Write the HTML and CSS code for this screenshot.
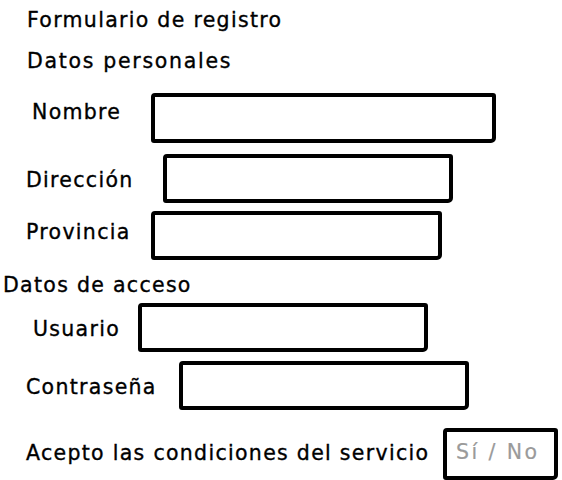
FILE: index.html
```html
<!DOCTYPE html>
<html lang="es">
<head>
<meta charset="utf-8">
<title>Formulario de registro</title>
<link rel="stylesheet" href="styles.css">
</head>
<body>
<main class="form">
  <h1 class="heading heading-title">Formulario de registro</h1>
  <h2 class="heading heading-personal">Datos personales</h2>

  <div class="row row-nombre">
    <label class="label">Nombre</label>
    <div class="field"></div>
  </div>
  <div class="row row-direccion">
    <label class="label">Dirección</label>
    <div class="field"></div>
  </div>
  <div class="row row-provincia">
    <label class="label">Provincia</label>
    <div class="field"></div>
  </div>

  <h2 class="heading heading-acceso">Datos de acceso</h2>

  <div class="row row-usuario">
    <label class="label">Usuario</label>
    <div class="field"></div>
  </div>
  <div class="row row-contrasena">
    <label class="label">Contraseña</label>
    <div class="field"></div>
  </div>
  <div class="row row-acepto">
    <label class="label">Acepto las condiciones del servicio</label>
    <div class="field field-choice">Sí / No</div>
  </div>
</main>
</body>
</html>
```

FILE: styles.css
```css
* { box-sizing: border-box; }

html, body {
  margin: 0;
  padding: 0;
  background: #ffffff;
}

body {
  font-family: "DejaVu Sans", "Noto Sans", sans-serif;
  font-size: 20.5px;
  font-weight: 400;
  letter-spacing: 1.3px;
  -webkit-text-stroke: 0.35px currentColor;
  line-height: 28px;
  color: #000000;
  width: 562px;
  height: 480px;
  overflow: hidden;
}

.form {
  display: flex;
  flex-direction: column;
  padding-top: 6px;
}

.heading {
  margin: 0;
  font-size: inherit;
  font-weight: 400;
  line-height: 28px;
}

.heading-title { padding-left: 27px; }
.heading-personal { padding-left: 27px; margin-top: 13px; letter-spacing: 1.7px; }
.heading-acceso { padding-left: 3px; margin-top: 11px; }

.row {
  display: flex;
  align-items: center;
}

.label {
  flex: 0 0 auto;
  white-space: nowrap;
  padding-top: 2px;
}

.field {
  flex: 0 0 auto;
  height: 49px;
  border: 4px solid #000000;
  border-radius: 4px 3px 5px 3px;
  background: #ffffff;
}

.row-nombre { margin-top: 18px; }
.row-nombre .label { width: 151px; padding-left: 32px; margin-bottom: 14px; }
.row-nombre .field { width: 345px; height: 50px; }

.row-direccion { margin-top: 11px; }
.row-direccion .label { width: 163px; padding-left: 26px; }
.row-direccion .field { width: 290px; }

.row-provincia { margin-top: 8px; }
.row-provincia .label { width: 151px; padding-left: 26px; margin-bottom: 9px; }
.row-provincia .field { width: 291px; }

.row-usuario { margin-top: 4px; }
.row-usuario .label { width: 138px; padding-left: 33px; }
.row-usuario .field { width: 290px; }

.row-contrasena { margin-top: 9px; }
.row-contrasena .label { width: 179px; padding-left: 26px; }
.row-contrasena .field { width: 290px; }

.row-acepto { margin-top: 18px; }
.row-acepto .label { width: 443px; padding-left: 26px; margin-bottom: 4px; }

.field-choice {
  width: 115px;
  height: 52px;
  padding-left: 9px;
  color: #9a9a9a;
  letter-spacing: 2.4px;
  -webkit-text-stroke: 0.2px currentColor;
  display: flex;
  align-items: center;
  padding-bottom: 4px;
}
```
